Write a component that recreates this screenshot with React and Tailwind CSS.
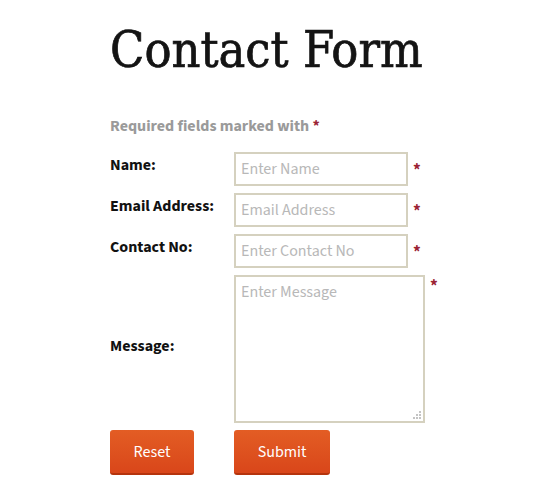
export default function App() {
  const rows = [
    { label: "Name:", placeholder: "Enter Name" },
    { label: "Email Address:", placeholder: "Email Address" },
    { label: "Contact No:", placeholder: "Enter Contact No" },
  ];

  return (
    <div className="min-h-screen bg-white pl-[110px] pt-[22px]">
      <h1 className="font-['DejaVu_Serif_Condensed','DejaVu_Serif',serif] text-[50px] leading-[56px] text-[#141414] [-webkit-text-stroke:0.7px_#141414]">
        Contact Form
      </h1>

      <form className="mt-[38px] font-['Source_Sans_3','Noto_Sans',sans-serif]">
        <p className="text-[16px] font-bold leading-5 text-[#9a9a9a]">
          Required fields marked with <span className="text-[#9b2335]">*</span>
        </p>

        <div className="mt-[16px] flex flex-col gap-[7px]">
          {rows.map((r) => (
            <div key={r.label} className="flex items-start">
              <label className="w-[124px] pt-[3px] text-[16px] font-bold leading-5 text-[#111]">
                {r.label}
              </label>
              <input
                placeholder={r.placeholder}
                className="h-[34px] w-[174px] border-2 border-[#d5d1bf] bg-white px-[5px] text-[16px] text-[#333] outline-none placeholder:text-[#b8b8b8]"
              />
              <span className="ml-[5px] pt-[8px] text-[17px] font-bold leading-5 text-[#9b2335]">*</span>
            </div>
          ))}

          <div className="flex items-start">
            <label className="flex h-[148px] w-[124px] items-center pb-[6px] text-[16px] font-bold leading-5 text-[#111]">
              Message:
            </label>
            <div className="relative">
              <textarea
                placeholder="Enter Message"
                className="block h-[148px] w-[191px] resize-none border-2 border-[#d5d1bf] bg-white px-[5px] py-[5px] text-[16px] leading-5 text-[#333] outline-none placeholder:text-[#b8b8b8]"
              />
              <svg className="absolute bottom-[4px] right-[4px]" width="9" height="9" viewBox="0 0 9 9" fill="#c4c4c4">
                <rect x="7" y="1" width="2" height="2" />
                <rect x="4" y="4" width="2" height="2" />
                <rect x="7" y="4" width="2" height="2" />
                <rect x="1" y="7" width="2" height="2" />
                <rect x="4" y="7" width="2" height="2" />
                <rect x="7" y="7" width="2" height="2" />
              </svg>
            </div>
            <span className="ml-[5px] pt-[1px] text-[17px] font-bold leading-5 text-[#9b2335]">*</span>
          </div>
        </div>

        <div className="mt-[7px] flex gap-[40px]">
          <button
            type="reset"
            className="h-[45px] w-[84px] rounded-[3px] border-b-2 border-[#b5340d] bg-gradient-to-b from-[#e35d24] to-[#d9461a] text-[16px] text-white"
          >
            Reset
          </button>
          <button
            type="submit"
            className="h-[45px] w-[96px] rounded-[3px] border-b-2 border-[#b5340d] bg-gradient-to-b from-[#e35d24] to-[#d9461a] text-[16px] text-white"
          >
            Submit
          </button>
        </div>
      </form>
    </div>
  );
}
